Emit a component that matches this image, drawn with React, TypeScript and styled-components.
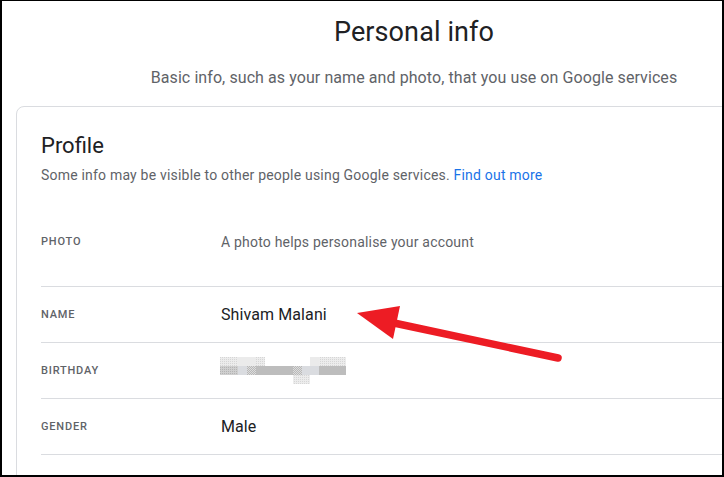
import React from 'react';
import styled, { createGlobalStyle } from 'styled-components';

const GlobalStyle = createGlobalStyle`
  body {
    margin: 0;
    background: #fff;
    font-family: Roboto, "Liberation Sans", Arial, sans-serif;
  }
`;

const Frame = styled.div`
  position: relative;
  width: 724px;
  height: 477px;
  box-sizing: border-box;
  border-style: solid;
  border-color: #000;
  border-width: 1px 2px 2px 2px;
  background: #fff;
  overflow: hidden;
`;

const Header = styled.header`
  width: 824px;
  text-align: center;
`;

const Title = styled.h1`
  margin: 15px 0 0;
  font-size: 27px;
  line-height: 32px;
  font-weight: 400;
  letter-spacing: 0.1px;
  color: #202124;
`;

const Subtitle = styled.p`
  margin: 18px 0 0;
  font-size: 16px;
  line-height: 24px;
  letter-spacing: 0.08px;
  color: #5f6368;
  white-space: nowrap;
`;

const Card = styled.section`
  margin: 16px 0 0 14px;
  width: 960px;
  border: 1px solid #dadce0;
  border-radius: 8px;
  padding: 24px 0 40px 24px;
`;

const CardTitle = styled.h2`
  margin: 0;
  font-size: 22px;
  line-height: 30px;
  font-weight: 400;
  color: #202124;
`;

const CardText = styled.p`
  margin: 4px 0 12px;
  font-size: 14px;
  line-height: 20px;
  letter-spacing: 0.2px;
  color: #5f6368;
`;

const Link = styled.a`
  color: #1a73e8;
  text-decoration: none;
`;

const Row = styled.div<{ $height: number }>`
  display: flex;
  align-items: center;
  height: ${p => p.$height}px;
  border-bottom: 1px solid #dadce0;
`;

const Label = styled.div`
  width: 180px;
  flex: none;
  font-size: 11px;
  font-weight: 500;
  letter-spacing: 0.8px;
  text-transform: uppercase;
  color: #5f6368;
`;

const Value = styled.div<{ $muted?: boolean }>`
  font-size: ${p => (p.$muted ? 14 : 16)}px;
  line-height: 24px;
  letter-spacing: ${p => (p.$muted ? 0.2 : 0.1)}px;
  color: ${p => (p.$muted ? '#5f6368' : '#202124')};
`;

const Blur = styled.svg`
  display: block;
  margin-left: -1px;
`;

const Overlay = styled.svg`
  position: absolute;
  left: -2px;
  top: -1px;
  pointer-events: none;
`;

const cells: [number, number, number, number, string][] = [
  // x, y, w, h, fill
  [0, 0, 18, 9, 'url(#dotLight)'],
  [18, 0, 18, 9, '#ebebeb'],
  [36, 0, 9, 9, 'url(#dotLight)'],
  [90, 0, 9, 9, '#ebebeb'],
  [99, 0, 27, 9, 'url(#dotLight)'],
  [0, 9, 18, 9, 'url(#dotDark)'],
  [18, 9, 9, 9, '#dadce0'],
  [27, 9, 9, 9, 'url(#checker)'],
  [36, 9, 37, 9, '#bdbdbd'],
  [73, 9, 9, 9, 'url(#checker)'],
  [82, 9, 17, 9, '#dadce0'],
  [99, 9, 27, 9, '#bdbdbd'],
  [73, 18, 17, 9, 'url(#dotLight)'],
];

const BlurredDate = () => (
  <Blur width="126" height="27" viewBox="0 0 126 27">
    <defs>
      <pattern id="dotLight" width="2" height="2" patternUnits="userSpaceOnUse">
        <rect width="2" height="2" fill="#ececec" />
        <rect width="1" height="1" fill="#d6d6d6" />
      </pattern>
      <pattern id="dotDark" width="2" height="2" patternUnits="userSpaceOnUse">
        <rect width="2" height="2" fill="#cfcfcf" />
        <rect width="1" height="1" fill="#b4b4b4" />
      </pattern>
      <pattern id="checker" width="2" height="2" patternUnits="userSpaceOnUse">
        <rect width="2" height="2" fill="#dcdcdc" />
        <rect width="1" height="1" fill="#b8b8b8" />
        <rect x="1" y="1" width="1" height="1" fill="#b8b8b8" />
      </pattern>
    </defs>
    {cells.map(([x, y, w, h, fill], i) => (
      <rect key={i} x={x} y={y} width={w} height={h} fill={fill} />
    ))}
  </Blur>
);

const rows = [
  { label: 'Photo', height: 89, value: <Value $muted>A photo helps personalise your account</Value> },
  { label: 'Name', height: 55, value: <Value>Shivam Malani</Value> },
  { label: 'Birthday', height: 55, value: <BlurredDate /> },
  { label: 'Gender', height: 55, value: <Value>Male</Value> },
];

const App = () => (
  <>
    <GlobalStyle />
    <Frame>
      <Header>
        <Title>Personal info</Title>
        <Subtitle>Basic info, such as your name and photo, that you use on Google services</Subtitle>
      </Header>
      <Card>
        <CardTitle>Profile</CardTitle>
        <CardText>
          Some info may be visible to other people using Google services. <Link href="#">Find out more</Link>
        </CardText>
        {rows.map(r => (
          <Row key={r.label} $height={r.height}>
            <Label>{r.label}</Label>
            {r.value}
          </Row>
        ))}
      </Card>
      <Overlay width="724" height="477" viewBox="0 0 724 477">
        <line x1="394" y1="323" x2="558" y2="358" stroke="#ed1c24" strokeWidth="7.5" strokeLinecap="round" />
        <polygon points="357,313 400,306 393,339" fill="#ed1c24" />
      </Overlay>
    </Frame>
  </>
);

export default App;
